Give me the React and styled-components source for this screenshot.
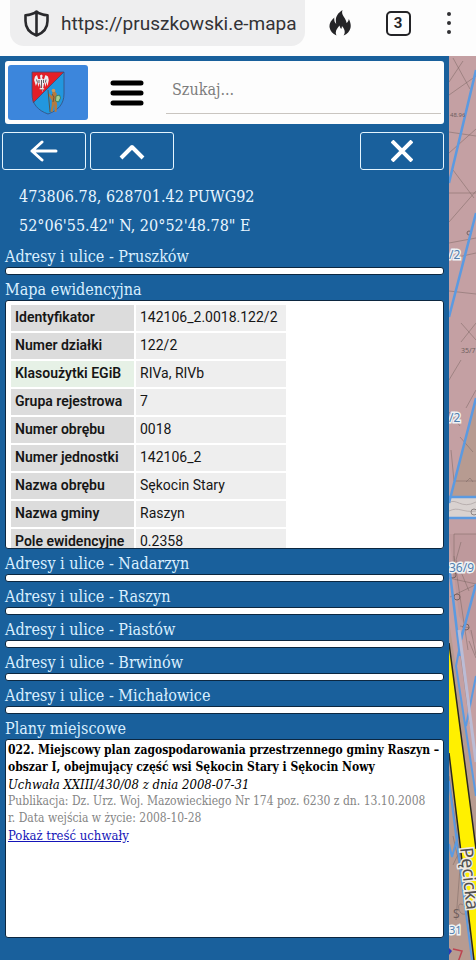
import React, { useState } from "react";
import styled, { createGlobalStyle } from "styled-components";

const slab = `"DejaVu Serif Condensed", "DejaVu Serif", serif`;
const sans = `Roboto, "Liberation Sans", sans-serif`;

const GlobalStyle = createGlobalStyle`
  * {
    box-sizing: border-box;
  }

  body {
    margin: 0;
    background: #19609c;
    font-family: ${slab};
  }
`;

const Page = styled.div`
  min-height: 100vh;
  display: flex;
  flex-direction: column;
`;

const BrowserBar = styled.header`
  height: 56px;
  display: flex;
  align-items: flex-start;
  padding-left: 10px;
  background: #fdfdfd;
`;

const AddressBox = styled.label`
  flex: 1;
  min-width: 0;
  height: 46px;
  display: flex;
  align-items: center;
  gap: 12px;
  padding: 0 6px 0 14px;
  border-radius: 0 0 14px 14px;
  background: #eeeeef;
`;

const AddressInput = styled.input`
  flex: 1;
  min-width: 0;
  padding: 0;
  border: 0;
  outline: 0;
  background: transparent;
  color: #333336;
  font: 19px ${sans};
`;

const BrowserActions = styled.div`
  display: flex;
  flex: none;
  height: 46px;
  padding: 0 5px 0 6px;
`;

const BrowserButton = styled.button`
  width: ${(props) => (props.$narrow ? "44px" : "58px")};
  padding: 0;
  border: 0;
  background: transparent;
  display: flex;
  align-items: center;
  justify-content: center;
`;

const TabCount = styled.span`
  width: 25px;
  height: 25px;
  border: 2px solid #242427;
  border-radius: 5px;
  color: #242427;
  font: 700 15px/21px ${sans};
`;

const Content = styled.div`
  flex: 1;
  display: grid;
  grid-template-columns: minmax(0, 1fr) 27px;
`;

const Panel = styled.main`
  padding: 5px 5px 22px;
  background: #19609c;
`;

const SearchBar = styled.div`
  height: 63px;
  display: flex;
  align-items: center;
  padding: 4px 3px;
  border-radius: 3px;
  background: #fdfdfd;
`;

const CrestLink = styled.a`
  width: 80px;
  height: 55px;
  display: flex;
  align-items: center;
  justify-content: center;
  border-radius: 3px;
  background: #3c86dc;
`;

const MenuButton = styled.button`
  width: 78px;
  height: 55px;
  padding: 0;
  border: 0;
  background: transparent;
  display: flex;
  align-items: center;
  justify-content: center;
`;

const SearchInput = styled.input`
  flex: 1;
  min-width: 0;
  height: 43px;
  padding: 0 6px 6px;
  border: 0;
  border-bottom: 1px solid #c9c5c0;
  outline: 0;
  background: transparent;
  font: 16px ${slab};

  &::placeholder {
    color: #7d7d7d;
    opacity: 1;
  }
`;

const Toolbar = styled.div`
  display: flex;
  gap: 4px;
  margin: 8px 0 12px -3px;
`;

const ToolButton = styled.button`
  width: 84px;
  height: 38px;
  padding: 0;
  display: flex;
  align-items: center;
  justify-content: center;
  border: 1px solid #e3f5ff;
  border-radius: 3px;
  background: transparent;
  color: #ffffff;
  margin-left: ${(props) => (props.$end ? "auto" : "0")};
`;

const Coordinates = styled.div`
  padding: 0 14px;
  margin-bottom: 2px;
  color: #e8f6ff;
  font-size: 16px;
  line-height: 29px;
`;

const SectionTitle = styled.h2`
  height: 25px;
  margin: 0;
  color: #d9efff;
  font-size: 16px;
  font-weight: 400;
  line-height: 30px;
  white-space: nowrap;
`;

const Frame = styled.div`
  min-height: 8px;
  height: ${(props) => props.$height || "8px"};
  overflow: hidden;
  border: 1px solid #0c2740;
  border-radius: 3px;
  background: #ffffff;
`;

const ParcelTable = styled.table`
  margin: 2px 3px;
  border-spacing: 2px;
  color: #161616;
  font: 14px/22px ${sans};

  th,
  td {
    height: 26px;
    padding: 0 4px 2px;
    text-align: left;
    white-space: nowrap;
  }

  th {
    width: 123px;
    font-weight: 600;
  }

  td {
    width: 150px;
    background: #eeeeee;
  }
`;

const RowName = styled.th`
  background: ${(props) => (props.$marked ? "#e6f1e6" : "#dcdcdc")};
`;

const Plan = styled.div`
  padding: 2px 0 2px 2px;
  font-size: 12px;
  line-height: 17px;
`;

const PlanTitle = styled.strong`
  display: block;
`;

const PlanAct = styled.em`
  display: block;
  font-size: 13px;
`;

const PlanNote = styled.div`
  color: #858585;
`;

const PlanLink = styled.a`
  color: #1515b8;
  font-size: 13px;
`;

const MapView = styled.svg`
  display: block;
  width: 100%;
  height: 100%;
  background: #c4a0a3;
`;

const parcel = [
  ["Identyfikator", "142106_2.0018.122/2"],
  ["Numer działki", "122/2"],
  ["Klasoużytki EGiB", "RIVa, RIVb"],
  ["Grupa rejestrowa", "7"],
  ["Numer obrębu", "0018"],
  ["Numer jednostki", "142106_2"],
  ["Nazwa obrębu", "Sękocin Stary"],
  ["Nazwa gminy", "Raszyn"],
  ["Pole ewidencyjne", "0.2358"],
];

const towns = ["Nadarzyn", "Raszyn", "Piastów", "Brwinów", "Michałowice"];

const ShieldIcon = () => (
  <svg width="25" height="27" viewBox="0 0 25 27" fill="none" aria-hidden="true">
    <path
      d="M12.5 1.5C9.5 4 6 5 1.5 5.2V11c0 7 4.500 12 11 14.500C19 23 23.500 18 23.500 11V5.200C19 5 15.500 4 12.500 1.500zM12.500 2v23"
      stroke="#29292c"
      strokeWidth="2.600"
      strokeLinejoin="round"
    />
  </svg>
);

const FlameIcon = () => (
  <svg width="22" height="26" viewBox="0 0 22 26" aria-hidden="true">
    <path
      d="M13.500 0C7.500 4 6 8 7.200 14 5.500 12.500 5 10 5.300 7.500 1.500 11 0 14 .6 17.500 1.200 21 3.600 23.800 7.500 25.500 5.500 21.500 8 19 10.500 15.500c.3 1.600 1 2.500 1.700 3.500.6-1 .8-1.800.7-3 3 3.300 3.700 6.500 1.700 9.500 3.600-1.500 6.200-4.300 6.900-7.500.7-3.500-.3-6.300-1.700-9-.2 1.800-.9 3-2.300 4C17.500 8 11.500 5.500 13.500 0z"
      fill="#242427"
    />
  </svg>
);

const DotsIcon = () => (
  <svg width="4" height="22" viewBox="0 0 4 22" fill="#303033" aria-hidden="true">
    <circle cx="2" cy="2" r="2" />
    <circle cx="2" cy="11" r="2" />
    <circle cx="2" cy="20" r="2" />
  </svg>
);

const Crest = () => (
  <svg width="34" height="44" viewBox="0 0 34 44" aria-hidden="true">
    <path d="M1 1h32v22c0 10-6 16.500-16 20C7 39.500 1 33 1 23z" fill="#2297de" />
    <path d="M1 1h32L2 32C1.200 29 1 26 1 23z" fill="#e31f28" />
    <path
      d="M1 1h32v22c0 10-6 16.500-16 20C7 39.500 1 33 1 23zM33 1L2 32"
      fill="none"
      stroke="#394d77"
      strokeWidth=".8"
    />
    <path
      d="M9 4.500l1.500-1 1.200 1.200L11 7l1.500 1.500C14 7 13.500 5.500 14.500 4L17 5.500l.8 3.500-1.200 6-1.400-4-.5 5-1.500-4.500-1 5.500 1.500 1-1.500.5-.7 2.500-1.200-2.500L8 18l1.800-1.300L8.700 12l-1.500 4-.7-5-1.600 4-1.800-6L4 5.500 6 4l1.200 4L9.500 8z"
      fill="#efedf0"
    />
    <path
      d="M5.500 8.500l1 3M8 9v3M12.500 9v3M15 8.500l-.6 3M10.500 9v8M10 19h2"
      stroke="#43343c"
      strokeWidth=".8"
    />
    <path
      d="M22 18.500l2 .3.300 2 1.500 2-.8 5 1.200 6-.6 7-1.800.2-.6-8-1.700 8-2-.5 1.200-6 .2-5-2-3-1.800-2.500 1.300-1.500 2.400 2.500z"
      fill="#b57a3d"
    />
    <circle cx="22.500" cy="19.500" r="1.800" fill="#cd9857" />
    <path d="M25 25l3.500-1 1 3-2 4-3-1z" fill="#a5ce91" stroke="#33764e" strokeWidth=".8" />
    <path d="M21 23l2 3-1 5M17 19l2 22" fill="none" stroke="#654829" strokeWidth=".8" />
  </svg>
);

const MenuIcon = () => (
  <svg width="34" height="26" viewBox="0 0 34 26" aria-hidden="true">
    <path d="M3 3h28M3 13h28M3 23h28" stroke="#000" strokeWidth="5" strokeLinecap="round" />
  </svg>
);

const ToolIcon = ({ path, width, stroke, cap = "round" }) => (
  <svg width={width} height="22" viewBox={`0 0 ${width} 22`} fill="none" aria-hidden="true">
    <path
      d={path}
      stroke="currentColor"
      strokeWidth={stroke}
      strokeLinecap={cap}
      strokeLinejoin="round"
    />
  </svg>
);

const MapStrip = () => (
  <MapView viewBox="0 0 27 904" preserveAspectRatio="xMinYMin slice" aria-label="Mapa">
    <path d="M27 342L0 447v-4h27zM0 565l27 180v159H0z" fill="#b79b91" />
    <path d="M0 478h27v110L10 560z" fill="#be999c" />
    <g fill="none" stroke="#77625f" strokeWidth=".8" opacity=".6">
      <path d="M0 26L14 5M4 2l17 31M0 39l27-19M0 76l27 4M0 97l27-24M0 137h27M4 114l21 28M0 166l27-31M0 187l27-5M0 203l27-6M0 235l27 3M12 267l15 17M12 286l15-19M0 324l12-20M17 352l10-18M0 356l11 14M11 381l13 15M2 394l3 31h22M17 426l4-4 3 4" />
      <path d="M5 522V478h22M5 500l14 94M0 522l27 6M12 486l-5 18 13 31M1 541l25-12M11 570l10 2M20 585l7 17M11 593l10 75M22 574l5 25" />
      <path d="M0 720l21 156M4 809l10-21 4 24M4 780l7 32-4 52M14 849c-7-5-5 11 2 9" />
    </g>
    <g fill="none" stroke="#77625f" strokeWidth="1">
      <circle cx="4" cy="519" r="3" />
      <circle cx="8" cy="541" r="3" />
      <circle cx="17" cy="571" r="3" />
      <circle cx="20" cy="177" r="2" />
    </g>
    <path d="M0 441h27v21H0z" fill="#d9d2d0" />
    <path d="M0 447c7-6 12 7 27-1M0 455c10-5 13 2 27 0" fill="none" stroke="#aaa0a0" strokeWidth=".7" />
    <circle cx="25" cy="456" r="3" fill="none" stroke="#8c8383" />
    <g fill="none" stroke="#5b9ae1" strokeWidth="2.500">
      <path d="M27 14L0 127M27 157L0 261M27 342L0 447M0 441h27M0 462h27M0 509l11 91M27 528L11 587" />
      <path d="M14 574L7 610l20 130M27 620l-10 50M0 788l3 13 14-50M0 725l23 179" strokeWidth="2" />
    </g>
    <path d="M10 574l17 132" stroke="#bbbcd5" strokeWidth="3" />
    <path d="M0 587l27 206v111h-2L0 697z" fill="#fff000" />
    <path d="M0 587l27 206M0 697l25 207" fill="none" stroke="#292820" strokeWidth="1.500" />
    <g
      fill="#527fae"
      stroke="#eef2f5"
      strokeWidth="3"
      paintOrder="stroke"
      fontFamily="Noto Sans, sans-serif"
      fontSize="12"
    >
      <text x="0" y="203">/2</text>
      <text x="0" y="366">/2</text>
      <text x="0" y="516">36/9</text>
      <text x="0" y="878" fontSize="11">31</text>
    </g>
    <g fill="#6e5e5d" fontFamily="Noto Sans, sans-serif">
      <text x="1" y="61" fontSize="6">48.96</text>
      <text x="12" y="297" fontSize="7">35/7</text>
      <text x="4" y="862" fontSize="12">S</text>
    </g>
    <text
      x="0"
      y="0"
      transform="translate(11 792) rotate(84)"
      fill="#505050"
      stroke="#eee9e4"
      strokeWidth="3"
      paintOrder="stroke"
      fontFamily="Noto Sans, sans-serif"
      fontSize="18"
    >
      Pęcicka
    </text>
    <path d="M4 893l9 2-5 14" fill="none" stroke="#bd4350" strokeWidth="1.500" />
    <path d="M0 892l3 3-3 4z" fill="#3038b8" />
  </MapView>
);

const App = () => {
  const [address, setAddress] = useState("https://pruszkowski.e-mapa");
  const [query, setQuery] = useState("");

  return (
    <Page>
      <GlobalStyle />
      <BrowserBar>
        <AddressBox>
          <ShieldIcon />
          <AddressInput
            aria-label="Adres strony"
            value={address}
            onChange={(e) => setAddress(e.target.value)}
          />
        </AddressBox>
        <BrowserActions>
          <BrowserButton aria-label="Wyczyść dane">
            <FlameIcon />
          </BrowserButton>
          <BrowserButton aria-label="Karty">
            <TabCount>3</TabCount>
          </BrowserButton>
          <BrowserButton $narrow aria-label="Więcej">
            <DotsIcon />
          </BrowserButton>
        </BrowserActions>
      </BrowserBar>

      <Content>
        <Panel>
          <SearchBar>
            <CrestLink href="#" aria-label="Powiat pruszkowski">
              <Crest />
            </CrestLink>
            <MenuButton aria-label="Menu">
              <MenuIcon />
            </MenuButton>
            <SearchInput
              aria-label="Szukaj"
              placeholder="Szukaj..."
              value={query}
              onChange={(e) => setQuery(e.target.value)}
            />
          </SearchBar>

          <Toolbar>
            <ToolButton aria-label="Wstecz">
              <ToolIcon width={28} stroke={3} path="M26 11H2M12 2l-10 9 10 9" />
            </ToolButton>
            <ToolButton aria-label="Zwiń">
              <ToolIcon width={26} stroke={4} cap="butt" path="M2 18l11-11 11 11" />
            </ToolButton>
            <ToolButton $end aria-label="Zamknij">
              <ToolIcon width={22} stroke={4} cap="butt" path="M1 1l20 20M21 1L1 21" />
            </ToolButton>
          </Toolbar>

          <Coordinates>
            <div>473806.78, 628701.42 PUWG92</div>
            <div>52°06'55.42" N, 20°52'48.78" E</div>
          </Coordinates>

          <SectionTitle>Adresy i ulice - Pruszków</SectionTitle>
          <Frame />

          <SectionTitle>Mapa ewidencyjna</SectionTitle>
          <Frame $height="249px">
            <ParcelTable>
              <tbody>
                {parcel.map(([name, value]) => (
                  <tr key={name}>
                    <RowName scope="row" $marked={name === "Klasoużytki EGiB"}>
                      {name}
                    </RowName>
                    <td>{value}</td>
                  </tr>
                ))}
              </tbody>
            </ParcelTable>
          </Frame>

          {towns.map((town) => (
            <React.Fragment key={town}>
              <SectionTitle>Adresy i ulice - {town}</SectionTitle>
              <Frame />
            </React.Fragment>
          ))}

          <SectionTitle>Plany miejscowe</SectionTitle>
          <Frame $height="199px">
            <Plan>
              <PlanTitle>
                022. Miejscowy plan zagospodarowania przestrzennego gminy Raszyn –
                obszar I, obejmujący część wsi Sękocin Stary i Sękocin Nowy
              </PlanTitle>
              <PlanAct>Uchwała XXIII/430/08 z dnia 2008-07-31</PlanAct>
              <PlanNote>
                Publikacja: Dz. Urz. Woj. Mazowieckiego Nr 174 poz. 6230 z dn.
                13.10.2008 r.&nbsp;Data wejścia w życie: 2008-10-28
              </PlanNote>
              <PlanLink href="#">Pokaż treść uchwały</PlanLink>
            </Plan>
          </Frame>
        </Panel>
        <MapStrip />
      </Content>
    </Page>
  );
};

export default App;
